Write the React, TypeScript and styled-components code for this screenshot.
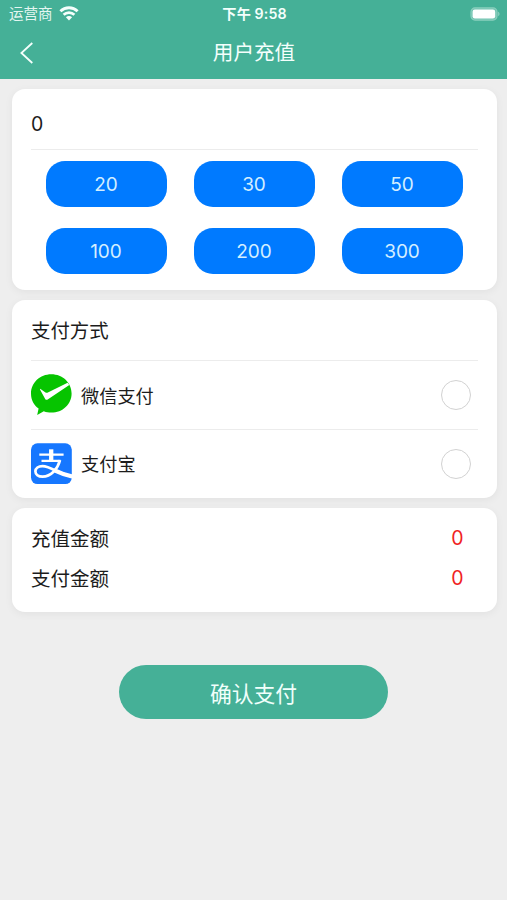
import React from "react";
import styled, { createGlobalStyle } from "styled-components";

const GlobalStyle = createGlobalStyle`
  * { box-sizing: border-box; }
  body {
    margin: 0;
    background: #eeeeee;
    font-family: Inter, "Noto Sans CJK SC", sans-serif;
    color: #1c1c1c;
  }
  button { font: inherit; border: 0; padding: 0; }
`;

const Screen = styled.div`
  height: 900px;
  background: #eeeeee;
  overflow: hidden;
`;

const Header = styled.header`
  height: 79px;
  background: #45b097;
  color: #f4fffc;
`;

const StatusBar = styled.div`
  height: 27px;
  padding: 0 7px 0 9px;
  display: grid;
  grid-template-columns: 1fr auto 1fr;
  align-items: center;
  font-size: 14.5px;
  line-height: 27px;
`;

const Carrier = styled.div`
  display: flex;
  align-items: center;
  gap: 6px;
  color: #e4f6f1;
`;

const Clock = styled.div`
  font-size: 14.2px;
  font-weight: 600;
  letter-spacing: 0.1px;
`;

const BatterySlot = styled.div`
  display: flex;
  justify-content: flex-end;
`;

const NavBar = styled.div`
  height: 52px;
  padding: 0 19px 0 20px;
  display: grid;
  grid-template-columns: 1fr auto 1fr;
  align-items: center;
`;

const BackButton = styled.button`
  width: 14px;
  height: 24px;
  background: none;
  color: inherit;
  display: flex;
`;

const Title = styled.h1`
  margin: 0;
  font-size: 20.6px;
  line-height: 52px;
  font-weight: 400;
`;

const Main = styled.main`
  padding: 9.5px 10.5px 0 11.5px;
  display: flex;
  flex-direction: column;
  gap: 10px;
`;

const Card = styled.section<{ $height: number }>`
  height: ${(p) => p.$height}px;
  padding: 0 19px 0 19.5px;
  background: #fff;
  border-radius: 13px;
  box-shadow: 0 2px 8px rgba(0, 0, 0, 0.055);
`;

const AmountInput = styled.div`
  height: 61px;
  padding-top: 9px;
  border-bottom: 1px solid #ececec;
  font-size: 19.5px;
  line-height: 53px;
`;

const AmountGrid = styled.div`
  padding: 11px 15px 0 14.5px;
  display: grid;
  grid-template-columns: repeat(3, 121px);
  justify-content: space-between;
  row-gap: 21px;
`;

const AmountButton = styled.button`
  height: 46px;
  padding-top: 1px;
  border-radius: 19px;
  background: #007aff;
  color: #d3eeff;
  font-size: 19px;
`;

const SectionTitle = styled.h2`
  height: 61px;
  margin: 0;
  padding-top: 1px;
  border-bottom: 1px solid #ececec;
  font-size: 19.4px;
  font-weight: 400;
  line-height: 61px;
`;

const MethodRow = styled.div<{ $divided?: boolean }>`
  height: ${(p) => (p.$divided ? 69 : 67)}px;
  padding-right: 6.5px;
  border-bottom: ${(p) => (p.$divided ? "1px solid #ececec" : "0")};
  display: flex;
  align-items: center;
  gap: 9px;
  font-size: 18.2px;
`;

const MethodName = styled.span`
  flex: 1;
  padding-bottom: 1px;
`;

const Radio = styled.span`
  width: 30px;
  height: 30px;
  border: 1.5px solid #d2d2d2;
  border-radius: 50%;
`;

const Totals = styled(Card)`
  padding-top: 9.5px;
`;

const TotalRow = styled.div`
  height: 40px;
  padding-right: 14px;
  display: flex;
  align-items: center;
  justify-content: space-between;
  font-size: 19.5px;
`;

const TotalLabel = styled.span`
  padding-bottom: 1px;
`;

const TotalValue = styled.span`
  color: #f02222;
  font-size: 19.5px;
`;

const ConfirmButton = styled.button`
  display: block;
  width: 269px;
  height: 54px;
  margin: 53.5px auto 0;
  border-radius: 27px;
  background: #45b097;
  color: #f0fffb;
  font-size: 21.8px;
`;

const WifiIcon = () => (
  <svg width="20" height="15" viewBox="0 0 20 15" fill="none" stroke="#f5fffc">
    <path d="M1.4 5.2C6.2.6 13.8.6 18.6 5.2" strokeWidth="2.9" />
    <path d="M4.6 8.8c3.1-2.9 7.7-2.9 10.8 0" strokeWidth="2.7" />
    <path d="M10 14.4 6.9 11.3c1.8-1.6 4.4-1.6 6.2 0Z" fill="#f5fffc" stroke="none" />
  </svg>
);

const BatteryIcon = () => (
  <svg width="30" height="14" viewBox="0 0 30 14">
    <rect x="1" y="0.9" width="26" height="12.2" rx="4" fill="#71c3b0" stroke="#8bcfbe" strokeWidth="1.2" />
    <rect x="2.6" y="2.5" width="22.6" height="9" rx="2.3" fill="#fff" />
    <path d="M28.1 4.8c1.9.7 1.9 3.7 0 4.4Z" fill="#8bcfbe" />
  </svg>
);

const BackIcon = () => (
  <svg width="14" height="24" viewBox="0 0 14 24" fill="none" stroke="#f4fffc" strokeWidth="1.8">
    <path d="M12.3 2 1.4 12l10.9 10" />
  </svg>
);

const WechatPayIcon = () => (
  <svg width="41" height="42" viewBox="0 0 41 42">
    <path d="M20.3.2C9 .2 0 8.7 0 19.5c0 6.6 2.9 11.8 7.6 15.1l-1.4 6.3 6.6-3.7c2.5 1 4.9 1.4 7.5 1.4 11.4 0 20.3-8.5 20.3-19.2S31.7.2 20.3.2Z" fill="#06c400" />
    <path d="M9.2 14.8 14.5 18.4c.8.5 1.5.6 2.4.2L36.6 8.8l1.7 2.2L16.7 25.5c-1 .6-1.9.5-2.5-.6L9 15.4Z" fill="#fff" />
  </svg>
);

const AlipayIcon = () => (
  <svg width="41" height="42" viewBox="0 0 41 42">
    <rect x="0" y="0.3" width="40.8" height="40.8" rx="6.5" fill="#1677ff" />
    <g fill="none" stroke="#fff" transform="translate(0 -0.3)">
      <path d="M20.2 6.6v11.8" strokeWidth="4.3" />
      <path d="M8.3 12h24.3M10.5 18.2h19.1" strokeWidth="2.3" />
      <path d="M29 17.4C26.6 26.5 20 34 11.6 34c-4.5 0-7.2-2.4-7.2-5.4 0-3.2 3-5.2 7.1-5.2 5.4 0 11.5 3.8 17.4 6.5 3.7 1.6 8 3 12.1 4.1" strokeWidth="2.7" />
      <path d="M24.2 28c5 2.5 11 4.6 17 5.8" strokeWidth="4.3" />
    </g>
  </svg>
);

const amounts = [20, 30, 50, 100, 200, 300];

const methods = [
  { name: "微信支付", icon: <WechatPayIcon /> },
  { name: "支付宝", icon: <AlipayIcon /> },
];

const totals = [
  { label: "充值金额", value: 0 },
  { label: "支付金额", value: 0 },
];

export default function App() {
  return (
    <Screen>
      <GlobalStyle />
      <Header>
        <StatusBar>
          <Carrier>
            运营商
            <WifiIcon />
          </Carrier>
          <Clock>下午 9:58</Clock>
          <BatterySlot>
            <BatteryIcon />
          </BatterySlot>
        </StatusBar>
        <NavBar>
          <BackButton aria-label="返回">
            <BackIcon />
          </BackButton>
          <Title>用户充值</Title>
        </NavBar>
      </Header>
      <Main>
        <Card $height={201.5}>
          <AmountInput>0</AmountInput>
          <AmountGrid>
            {amounts.map((amount) => (
              <AmountButton key={amount}>{amount}</AmountButton>
            ))}
          </AmountGrid>
        </Card>
        <Card $height={198}>
          <SectionTitle>支付方式</SectionTitle>
          {methods.map((method, i) => (
            <MethodRow key={method.name} $divided={i === 0}>
              {method.icon}
              <MethodName>{method.name}</MethodName>
              <Radio />
            </MethodRow>
          ))}
        </Card>
        <Totals $height={103.5}>
          {totals.map((row) => (
            <TotalRow key={row.label}>
              <TotalLabel>{row.label}</TotalLabel>
              <TotalValue>{row.value}</TotalValue>
            </TotalRow>
          ))}
        </Totals>
      </Main>
      <ConfirmButton>确认支付</ConfirmButton>
    </Screen>
  );
}
